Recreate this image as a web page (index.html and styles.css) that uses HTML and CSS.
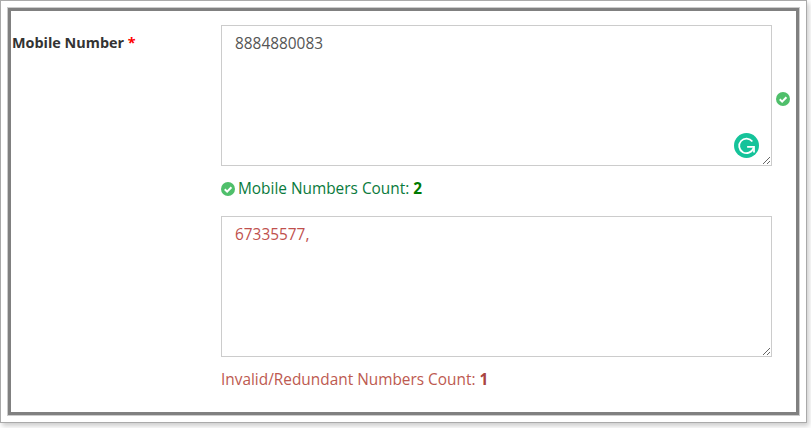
FILE: index.html
```html
<!DOCTYPE html>
<html lang="en">

<head>
    <meta charset="UTF-8" />
    <title>Mobile Number</title>
    <link rel="stylesheet" href="styles.css">
</head>

<body>
    <div class="frame">
        <div class="panel">
            <label class="field-label" for="numbers">Mobile Number <span class="required">*</span></label>
            <div class="field">
                <div class="input-wrap">
                    <textarea id="numbers" class="numbers">8884880083</textarea>
                    <svg class="check check-side" viewBox="0 0 16 16">
                        <circle cx="8" cy="8" r="8" fill="#4fbf6b" />
                        <path d="M4.3 8.3 7 11l4.9-5" fill="none" stroke="#fff" stroke-width="2.3" />
                    </svg>
                    <div class="grammarly">
                        <svg viewBox="0 0 24 24">
                            <path d="M17.6 8.2A7 7 0 1 0 18.6 14.6" fill="none" stroke="#fff" stroke-width="1.7" />
                            <path d="M12.6 13.4H19.2V18.6" fill="none" stroke="#fff" stroke-width="1.7" />
                        </svg>
                    </div>
                </div>
                <div class="count count-ok">
                    <svg class="check check-inline" viewBox="0 0 16 16">
                        <circle cx="8" cy="8" r="8" fill="#4fbf6b" />
                        <path d="M4.3 8.3 7 11l4.9-5" fill="none" stroke="#fff" stroke-width="2.3" />
                    </svg>
                    Mobile Numbers Count: <b>2</b>
                </div>
                <div class="input-wrap">
                    <textarea class="numbers numbers-bad">67335577,</textarea>
                </div>
                <div class="count count-bad">Invalid/Redundant Numbers Count: <b>1</b></div>
            </div>
        </div>
    </div>
</body>

</html>
```

FILE: styles.css
```css
body {
    margin: 0;
    height: 428px;
    background: #fff;
    font-family: "Open Sans", sans-serif;
    font-size: 15.4px;
    color: #333;
}

.frame {
    width: 807px;
    height: 423px;
    padding: 7px;
    box-sizing: border-box;
    border: 1px solid #aaa;
    background: #fff;
    box-shadow: 2px 3px 5px rgba(0, 0, 0, 0.2);
}

.panel {
    display: flex;
    height: 100%;
    box-sizing: border-box;
    padding: 14px 0 0 1px;
    border: 3px solid #808080;
    box-shadow: 0 0 0 1px #ccc;
}

.field-label {
    width: 209px;
    padding-top: 8px;
    font-size: 14.4px;
    font-weight: 700;
    color: #333;
}

.required {
    color: #f00;
}

.field {
    width: 551px;
}

.input-wrap {
    position: relative;
    height: 141px;
}

.numbers {
    display: block;
    width: 100%;
    height: 100%;
    box-sizing: border-box;
    margin: 0;
    padding: 8px 13px;
    border: 1px solid #ccc;
    outline: none;
    font-family: "Open Sans", sans-serif;
    font-size: 15.4px;
    line-height: 20px;
    color: #555;
}

.numbers-bad {
    color: #c0504d;
}

.count {
    height: 20px;
    line-height: 20px;
}

.count-ok {
    margin: 13px 0 17px;
    color: #0a7a3c;
}

.count-ok b {
    color: #007a00;
}

.count-bad {
    margin-top: 13px;
    color: #bd5a50;
}

.count-bad b {
    color: #a94442;
}

.check {
    width: 14px;
    height: 14px;
    vertical-align: -2px;
}

.check-inline {
    margin-right: -1px;
}

.check-side {
    position: absolute;
    left: 555px;
    top: 67px;
}

.grammarly {
    position: absolute;
    right: 13px;
    bottom: 8px;
    width: 25px;
    height: 25px;
    border-radius: 50%;
    background: #15c39a;
}

.grammarly svg {
    display: block;
    width: 25px;
    height: 25px;
}
```
